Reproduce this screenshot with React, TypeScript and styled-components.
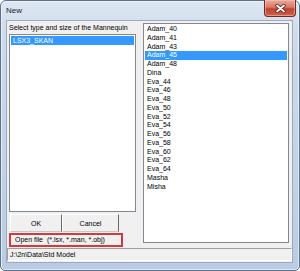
import React from 'react';
import styled, { createGlobalStyle } from 'styled-components';

const GlobalStyle = createGlobalStyle`
  html, body {
    margin: 0;
    padding: 0;
    background: #ffffff;
  }
  body {
    font-family: "Liberation Sans", Arial, sans-serif;
    color: #000;
  }
`;

const Window = styled.div`
  width: 300px;
  height: 271px;
  box-sizing: border-box;
  display: flex;
  flex-direction: column;
  padding: 0 6px 7px 5px;
  border: 1px solid #5f7189;
  border-radius: 6px 6px 5px 5px;
  background: linear-gradient(180deg, #dde7f3 0%, #cddbeb 12%, #c2d3e7 60%, #b9cce3 100%);
  box-shadow: inset 0 0 0 1px rgba(255, 255, 255, 0.55);
`;

const TitleBar = styled.div`
  height: 19px;
  flex: none;
  display: flex;
  justify-content: space-between;
  align-items: flex-start;
`;

const Title = styled.div`
  padding-top: 5px;
  font-size: 8px;
  line-height: 9px;
  color: #1b1b1b;
`;

const CloseButton = styled.div`
  width: 32px;
  height: 17px;
  margin: -1px -3px 0 0;
  box-sizing: border-box;
  display: flex;
  align-items: center;
  justify-content: center;
  border: 1px solid #6d2a22;
  border-top: none;
  border-radius: 0 0 4px 4px;
  background: linear-gradient(180deg, #e9a99c 0%, #d77b68 45%, #c1432e 55%, #d0604a 100%);
  box-shadow: inset 0 0 0 1px rgba(255, 210, 200, 0.5);
`;

const Client = styled.div`
  flex: 1;
  display: flex;
  flex-direction: column;
  background: #f0f0f0;
  border: 1px solid #9aabbf;
`;

const Main = styled.div`
  display: flex;
  align-items: flex-start;
  gap: 7px;
  padding: 2px 3px 0 2px;
`;

const LeftColumn = styled.div`
  width: 127px;
  display: flex;
  flex-direction: column;
`;

const Label = styled.div`
  height: 11px;
  font-size: 7px;
  line-height: 9px;
  box-sizing: border-box;
  white-space: nowrap;
`;

const ListBox = styled.div<{ $height: number }>`
  height: ${(p) => p.$height}px;
  box-sizing: border-box;
  background: #ffffff;
  border: 1px solid #828790;
  padding: 1px 1px;
  overflow: hidden;
`;

const RightList = styled(ListBox)`
  width: 146px;
  flex: none;
`;

const Row = styled.div<{ $selected?: boolean; $height: number }>`
  height: ${(p) => p.$height}px;
  line-height: ${(p) => p.$height}px;
  font-size: 7px;
  padding-left: 2px;
  white-space: nowrap;
  color: ${(p) => (p.$selected ? '#ffffff' : '#000000')};
  background: ${(p) => (p.$selected ? '#3399ff' : 'transparent')};
`;

const ButtonRow = styled.div`
  display: flex;
  margin-top: 2px;
  padding-left: 1px;
  height: 18px;
`;

const Button = styled.div<{ $width: number }>`
  width: ${(p) => p.$width}px;
  height: 18px;
  box-sizing: border-box;
  display: flex;
  align-items: center;
  justify-content: center;
  font-size: 7px;
  border-top: 1px solid #ffffff;
  border-left: 1px solid #ffffff;
  border-right: 1px solid #6a6a6a;
  border-bottom: 1px solid #c8c8c8;
  background: #f0f0f0;
`;

const OpenFile = styled.div`
  width: 114px;
  height: 14px;
  margin-top: 1px;
  box-sizing: border-box;
  border: 2px solid #d33b3b;
  background: #f0f0f0;
  font-size: 7px;
  line-height: 10px;
  padding-left: 4px;
  white-space: pre;
`;

const StatusBar = styled.div`
  height: 13px;
  margin-top: 1px;
  box-sizing: border-box;
  border-top: 1px solid #a0a0a0;
  border-left: 1px solid #a0a0a0;
  border-right: 1px solid #ffffff;
  border-bottom: 1px solid #ffffff;
  font-size: 7px;
  line-height: 11px;
  padding-left: 2px;
  white-space: nowrap;
`;

const mannequins = [
  'Adam_40',
  'Adam_41',
  'Adam_43',
  'Adam_45',
  'Adam_48',
  'Dina',
  'Eva_44',
  'Eva_46',
  'Eva_48',
  'Eva_50',
  'Eva_52',
  'Eva_54',
  'Eva_56',
  'Eva_58',
  'Eva_60',
  'Eva_62',
  'Eva_64',
  'Masha',
  'Misha',
];

const CloseIcon = () => (
  <svg width="11" height="9" viewBox="0 0 11 9">
    <path d="M2 1.5 L9 7.5 M9 1.5 L2 7.5" stroke="#5a1c15" strokeWidth="3.4" strokeLinecap="round" />
    <path d="M2 1.5 L9 7.5 M9 1.5 L2 7.5" stroke="#ffffff" strokeWidth="1.8" strokeLinecap="round" />
  </svg>
);

const App = () => {
  return (
    <>
      <GlobalStyle />
      <Window>
        <TitleBar>
          <Title>New</Title>
          <CloseButton>
            <CloseIcon />
          </CloseButton>
        </TitleBar>
        <Client>
          <Main>
            <LeftColumn>
              <Label>Select type and size of the Mannequin</Label>
              <ListBox $height={178}>
                <Row $selected $height={9}>
                  LSX3_SKAN
                </Row>
              </ListBox>
              <ButtonRow>
                <Button $width={52}>OK</Button>
                <Button $width={57}>Cancel</Button>
              </ButtonRow>
              <OpenFile>{'Open file  (*.lsx, *.man, *.obj)'}</OpenFile>
            </LeftColumn>
            <RightList $height={220}>
              {mannequins.map((name) => (
                <Row key={name} $height={8.75} $selected={name === 'Adam_45'}>
                  {name}
                </Row>
              ))}
            </RightList>
          </Main>
          <StatusBar>J:\2n\Data\Std Model</StatusBar>
        </Client>
      </Window>
    </>
  );
};

export default App;
